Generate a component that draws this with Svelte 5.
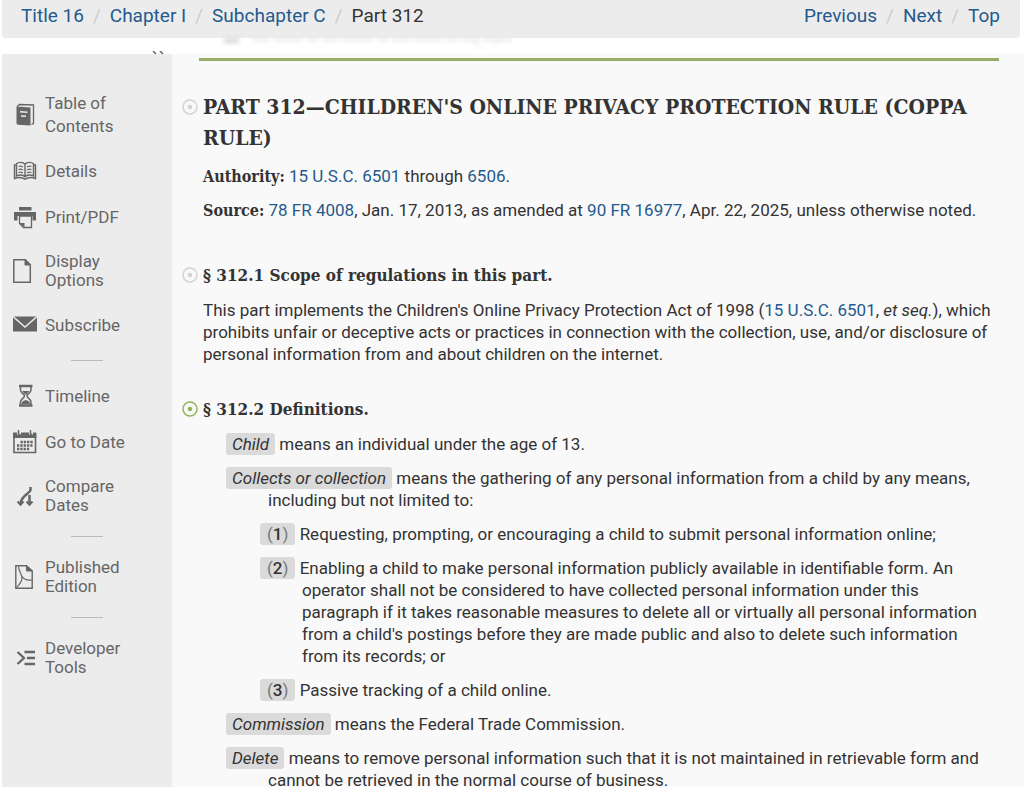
<script>
	const crumbs = [
		{ label: 'Title 16', href: '#title-16' },
		{ label: 'Chapter I', href: '#chapter-I' },
		{ label: 'Subchapter C', href: '#subchapter-C' }
	];

	const pager = ['Previous', 'Next', 'Top'];

	const groups = [
		[
			{ label: 'Table of Contents', icon: 'book', loose: true },
			{ label: 'Details', icon: 'details' },
			{ label: 'Print/PDF', icon: 'print' },
			{ label: 'Display Options', icon: 'page' },
			{ label: 'Subscribe', icon: 'mail' }
		],
		[
			{ label: 'Timeline', icon: 'timeline' },
			{ label: 'Go to Date', icon: 'calendar' },
			{ label: 'Compare Dates', icon: 'compare' }
		],
		[{ label: 'Published Edition', icon: 'pdf' }],
		[{ label: 'Developer Tools', icon: 'tools' }]
	];
</script>

{#snippet icon(name)}
	<svg class="icon" viewBox="0 0 24 24" width="24" height="24" fill="none" stroke="currentColor" aria-hidden="true">
		{#if name === 'book'}
			<path d="M4 3.500 6.500 1.500 20.500 2v18.500l-2 .8" stroke-width="1.300" />
			<path d="M3.500 3.600 17.500 4.600V22.600L5 21.800Q3.500 21.500 3.500 20Z" fill="currentColor" stroke="none" />
			<path d="M7 8.800 14.500 9.200M8 13l5 .3" stroke="#ececec" stroke-width="1.500" />
		{:else if name === 'details'}
			<path d="M12 5.200C10 2.800 5.500 2.800 3.500 4.800V17c2.500-1.500 6.500-1.500 8.500.8 2-2.300 6-2.300 8.500-.8V4.800C18.500 2.800 14 2.800 12 5.200ZM12 5.200v12.600M3.500 6H1.500v13.500c3.500-1.300 7.500-1.300 10.500.7 3-2 7-2 10.500-.7V6h-2" stroke-width="1.400" />
			<path d="M5.500 7.500q2-.8 4.500.5M5.500 10.500q2-.8 4.500.5M5.500 13.500q2-.8 4.500.5M14 8q2.500-1.300 4.500-.5M14 11q2.500-1.300 4.500-.5M14 14q2.500-1.300 4.500-.5" stroke-width="1.200" />
		{:else if name === 'print'}
			<path d="M6 2h12.500v3.500H6ZM1 7h22v8.500h-3.500V11h-15v4.500H1Z" fill="currentColor" stroke="none" />
			<path d="M6.500 11h12v11.500h-8l-4-4Z" fill="#ececec" stroke-width="1.300" />
			<path d="M6.500 18h5v4.500Z" fill="currentColor" stroke="none" />
		{:else if name === 'page'}
			<path d="M.8.8h11.500l5 5v17.400H.8Z" stroke-width="1.500" />
			<path d="M12 .8v5.200h5.300Z" fill="currentColor" stroke-width="1" />
		{:else if name === 'mail'}
			<path d="M0 3.500h24v15H0Z" fill="currentColor" stroke="none" />
			<path d="m0 3.500 12 10.500L24 3.500" stroke="#ececec" stroke-width="1.500" />
		{:else if name === 'timeline'}
			<path d="M6 2h13.500M6 21.500h13.500" stroke-width="2.500" />
			<path d="M7.500 3v3c0 3 4 4 4 6s-4 3-4 6v3M18 3v3c0 3-4 4-4 6s4 3 4 6v3" stroke-width="1.500" />
			<path d="M9 7h7.500l-3.700 4ZM8.500 20q0-3 4.300-4 4.200 1 4.200 4Z" fill="currentColor" stroke="none" />
		{:else if name === 'calendar'}
			<path d="M1 4h21.500v18.500H1Z" stroke-width="1.600" />
			<path d="M0 2.500h23.300V8H0Z" fill="currentColor" stroke="none" />
			<path d="M6 0v5M18 0v5" stroke="#ececec" stroke-width="4" />
			<path d="M5.500 0v4.500h2M17.500 0v4.500h2" stroke-width="1.500" />
			<path d="M7.500 12h13M4 15.500h16.500M4 19h13" stroke-width="2.400" stroke-dasharray="2.300 1" />
		{:else if name === 'compare'}
			<path d="M17.500 3v3C17 9.500 8.500 11 7.500 19.500M16.500 11v9" stroke-width="2.500" />
			<path d="m4.500 17.500 3 3.200 3-3.200M13.500 17.500l3 3.200 3-3.200" stroke-width="2" />
		{:else if name === 'pdf'}
			<path d="M2.800.8h10.700l5.700 5v17.400H2.800Z" stroke-width="1.400" />
			<path d="M13.500.8v5.200h5.500Z" fill="currentColor" stroke-width="1" />
			<path d="M5.500 1.500C6 7 9 9 9 13c0 3-4 8-5.500 9.500M8 10c3 6 7 5 11 5" stroke-width="1.200" />
		{:else if name === 'tools'}
			<path d="m4.500 6 6.500 6-6.500 6" stroke-width="2.300" />
			<path d="M11.500 6H22M14 12h8M11.500 18H22" stroke-width="2.500" />
		{/if}
	</svg>
{/snippet}

{#snippet target(active)}
	<button class="target" class:active aria-label="Section options">
		<svg viewBox="0 0 16 16" width="16" height="16" aria-hidden="true">
			<circle cx="8" cy="8" r="7" fill="none" stroke="currentColor" stroke-width="1.500" />
			<circle cx="8" cy="8" r="2.300" fill="currentColor" />
		</svg>
	</button>
{/snippet}

<header>
	<nav class="bar" aria-label="Breadcrumb">
		<ol class="crumbs">
			{#each crumbs as crumb}
				<li><a href={crumb.href}>{crumb.label}</a></li>
			{/each}
			<li>Part 312</li>
		</ol>
		<ol class="crumbs">
			{#each pager as label}
				<li><a href="#{label.toLowerCase()}">{label}</a></li>
			{/each}
		</ol>
	</nav>
	<svg class="fade" width="320" height="16" viewBox="0 0 320 16" aria-hidden="true">
		<path d="M2 0h15v5H2Z" fill="#d8d8d8" />
		<path d="M30 1h260" stroke="#e8e8e8" stroke-width="4" stroke-dasharray="18 3 30 4 12 3" />
		<path d="m252 4 6 4M272 6l6-4" stroke="#e8e8e8" stroke-width="2" />
	</svg>
</header>

<div class="layout">
	<aside>
		<svg class="collapse" viewBox="0 0 14 4" width="14" height="4" aria-hidden="true">
			<path d="m2 0 3 3M9 0l3 3" stroke="currentColor" stroke-width="1.500" />
		</svg>
		{#each groups as group}
			<ul class="group">
				{#each group as item}
					<li>
						<a class="tool" class:loose={item.loose} href="#{item.icon}">
							{@render icon(item.icon)}
							<span>{item.label}</span>
						</a>
					</li>
				{/each}
			</ul>
		{/each}
	</aside>

	<main>
		<hr />
		<div class="heading">
			{@render target(false)}
			<h1>PART 312—CHILDREN'S ONLINE PRIVACY PROTECTION RULE (COPPA RULE)</h1>
		</div>
		<p><strong>Authority:</strong> <a href="#15-usc-6501">15 U.S.C. 6501</a> through <a href="#6506">6506</a>.</p>
		<p>
			<strong>Source:</strong> <a href="#78-fr-4008">78 FR 4008</a>, Jan. 17, 2013, as amended at
			<a href="#90-fr-16977">90 FR 16977</a>, Apr. 22, 2025, unless otherwise noted.
		</p>

		<section>
			<div class="heading">
				{@render target(false)}
				<h2>§ 312.1 Scope of regulations in this part.</h2>
			</div>
			<p>
				This part implements the Children's Online Privacy Protection Act of 1998 (<a href="#15-usc-6501">15 U.S.C. 6501</a>, <em>et seq.</em>), which
				prohibits unfair or deceptive acts or practices in connection with the collection, use, and/or disclosure of
				personal information from and about children on the internet.
			</p>
		</section>

		<section>
			<div class="heading">
				{@render target(true)}
				<h2>§ 312.2 Definitions.</h2>
			</div>
			<div class="definitions">
				<p><dfn>Child</dfn> means an individual under the age of 13.</p>
				<p><dfn>Collects or collection</dfn> means the gathering of any personal information from a child by any means, including but not limited to:</p>
				<p class="sub"><span class="num">(<b>1</b>)</span> Requesting, prompting, or encouraging a child to submit personal information online;</p>
				<p class="sub"><span class="num">(<b>2</b>)</span> Enabling a child to make personal information publicly available in identifiable form. An operator shall not be considered to have collected personal information under this paragraph if it takes reasonable measures to delete all or virtually all personal information from a child's postings before they are made public and also to delete such information from its records; or</p>
				<p class="sub"><span class="num">(<b>3</b>)</span> Passive tracking of a child online.</p>
				<p><dfn>Commission</dfn> means the Federal Trade Commission.</p>
				<p><dfn>Delete</dfn> means to remove personal information such that it is not maintained in retrievable form and cannot be retrieved in the normal course of business.</p>
			</div>
		</section>
	</main>
</div>

<style>
	:global(body) {
		margin: 0;
		background: #fff;
		color: #333;
		font-family: Roboto, 'Liberation Sans', sans-serif;
		font-size: 17px;
		line-height: 22px;
	}

	a {
		color: #255a8e;
		text-decoration: none;
	}

	ol,
	ul {
		margin: 0;
		padding: 0;
		list-style: none;
	}

	header {
		margin: 0 4px 0 2px;
	}

	.bar {
		display: flex;
		justify-content: space-between;
		padding: 4px 20px 10px 19px;
		background: #ececec;
		border-radius: 0 0 4px 4px;
		font-size: 19px;
		line-height: 24px;
	}

	.crumbs {
		display: flex;
	}

	.crumbs li + li::before {
		content: '/';
		padding: 0 9px;
		color: #ccc;
	}

	.fade {
		display: block;
		margin-left: 220px;
		filter: blur(2px);
	}

	.layout {
		display: flex;
		margin-left: 2px;
	}

	aside {
		position: relative;
		box-sizing: border-box;
		flex: 0 0 170px;
		padding-top: 38px;
		background: #ececec;
		color: #666;
	}

	.collapse {
		position: absolute;
		top: -3px;
		right: 7px;
	}

	.group {
		display: flex;
		flex-direction: column;
		gap: 24px;
		padding-left: 11px;
	}

	.group + .group::before {
		content: '';
		width: 32px;
		height: 1px;
		margin: 24px 0 0 58px;
		background: #bbb;
	}

	.group:nth-of-type(n + 3) {
		gap: 21px;
	}

	.group:nth-of-type(n + 3)::before {
		margin-top: 21px;
	}

	.tool {
		display: flex;
		align-items: center;
		gap: 8px;
		min-height: 22px;
		color: #666;
		line-height: 19px;
	}

	.tool span {
		width: 90px;
	}

	.tool.loose {
		margin-bottom: -2px;
		line-height: 23px;
	}

	.icon {
		flex: none;
		margin: -3px 0;
	}

	main {
		flex: 1;
		min-width: 0;
		padding: 4px 25px 0 27px;
		background: #f9f9f9;
	}

	hr {
		height: 3px;
		margin: 0 0 30px;
		border: 0;
		background: #98ad68;
	}

	main > p,
	section {
		margin-left: 4px;
	}

	p {
		margin: 0 0 12px;
	}

	h1,
	h2,
	strong {
		font-family: 'DejaVu Serif Condensed', 'DejaVu Serif', serif;
		font-weight: bold;
	}

	h1,
	h2 {
		margin: 0;
	}

	h1 {
		font-size: 21px;
		line-height: 31px;
	}

	h2 {
		font-size: 17px;
		line-height: 24px;
	}

	strong {
		font-size: 16px;
		line-height: 16px;
	}

	.heading {
		display: flex;
		align-items: flex-start;
		gap: 5px;
		margin: 0 0 12px -17px;
	}

	section {
		margin-top: 42px;
	}

	section + section {
		margin-top: 32px;
	}

	section .heading {
		margin: 0 0 12px -21px;
	}

	.target {
		display: flex;
		flex: none;
		margin: 8px 0 0;
		padding: 0;
		border: 0;
		background: none;
		color: #d3d3d3;
	}

	section .target {
		margin-top: 4px;
	}

	.target.active {
		color: #94b35c;
	}

	.definitions {
		margin-right: 12px;
	}

	.definitions p {
		margin-left: 65px;
		text-indent: -42px;
	}

	.definitions p:last-child {
		margin-bottom: 0;
	}

	.definitions .sub {
		margin-left: 99px;
	}

	dfn,
	.num {
		display: inline-block;
		padding: 0 6px;
		border-radius: 3px;
		background: #dadada;
		text-indent: 0;
	}

	.num {
		padding: 0 7px;
		color: #777;
	}

	.num b {
		color: #333;
		font-weight: 500;
	}
</style>
